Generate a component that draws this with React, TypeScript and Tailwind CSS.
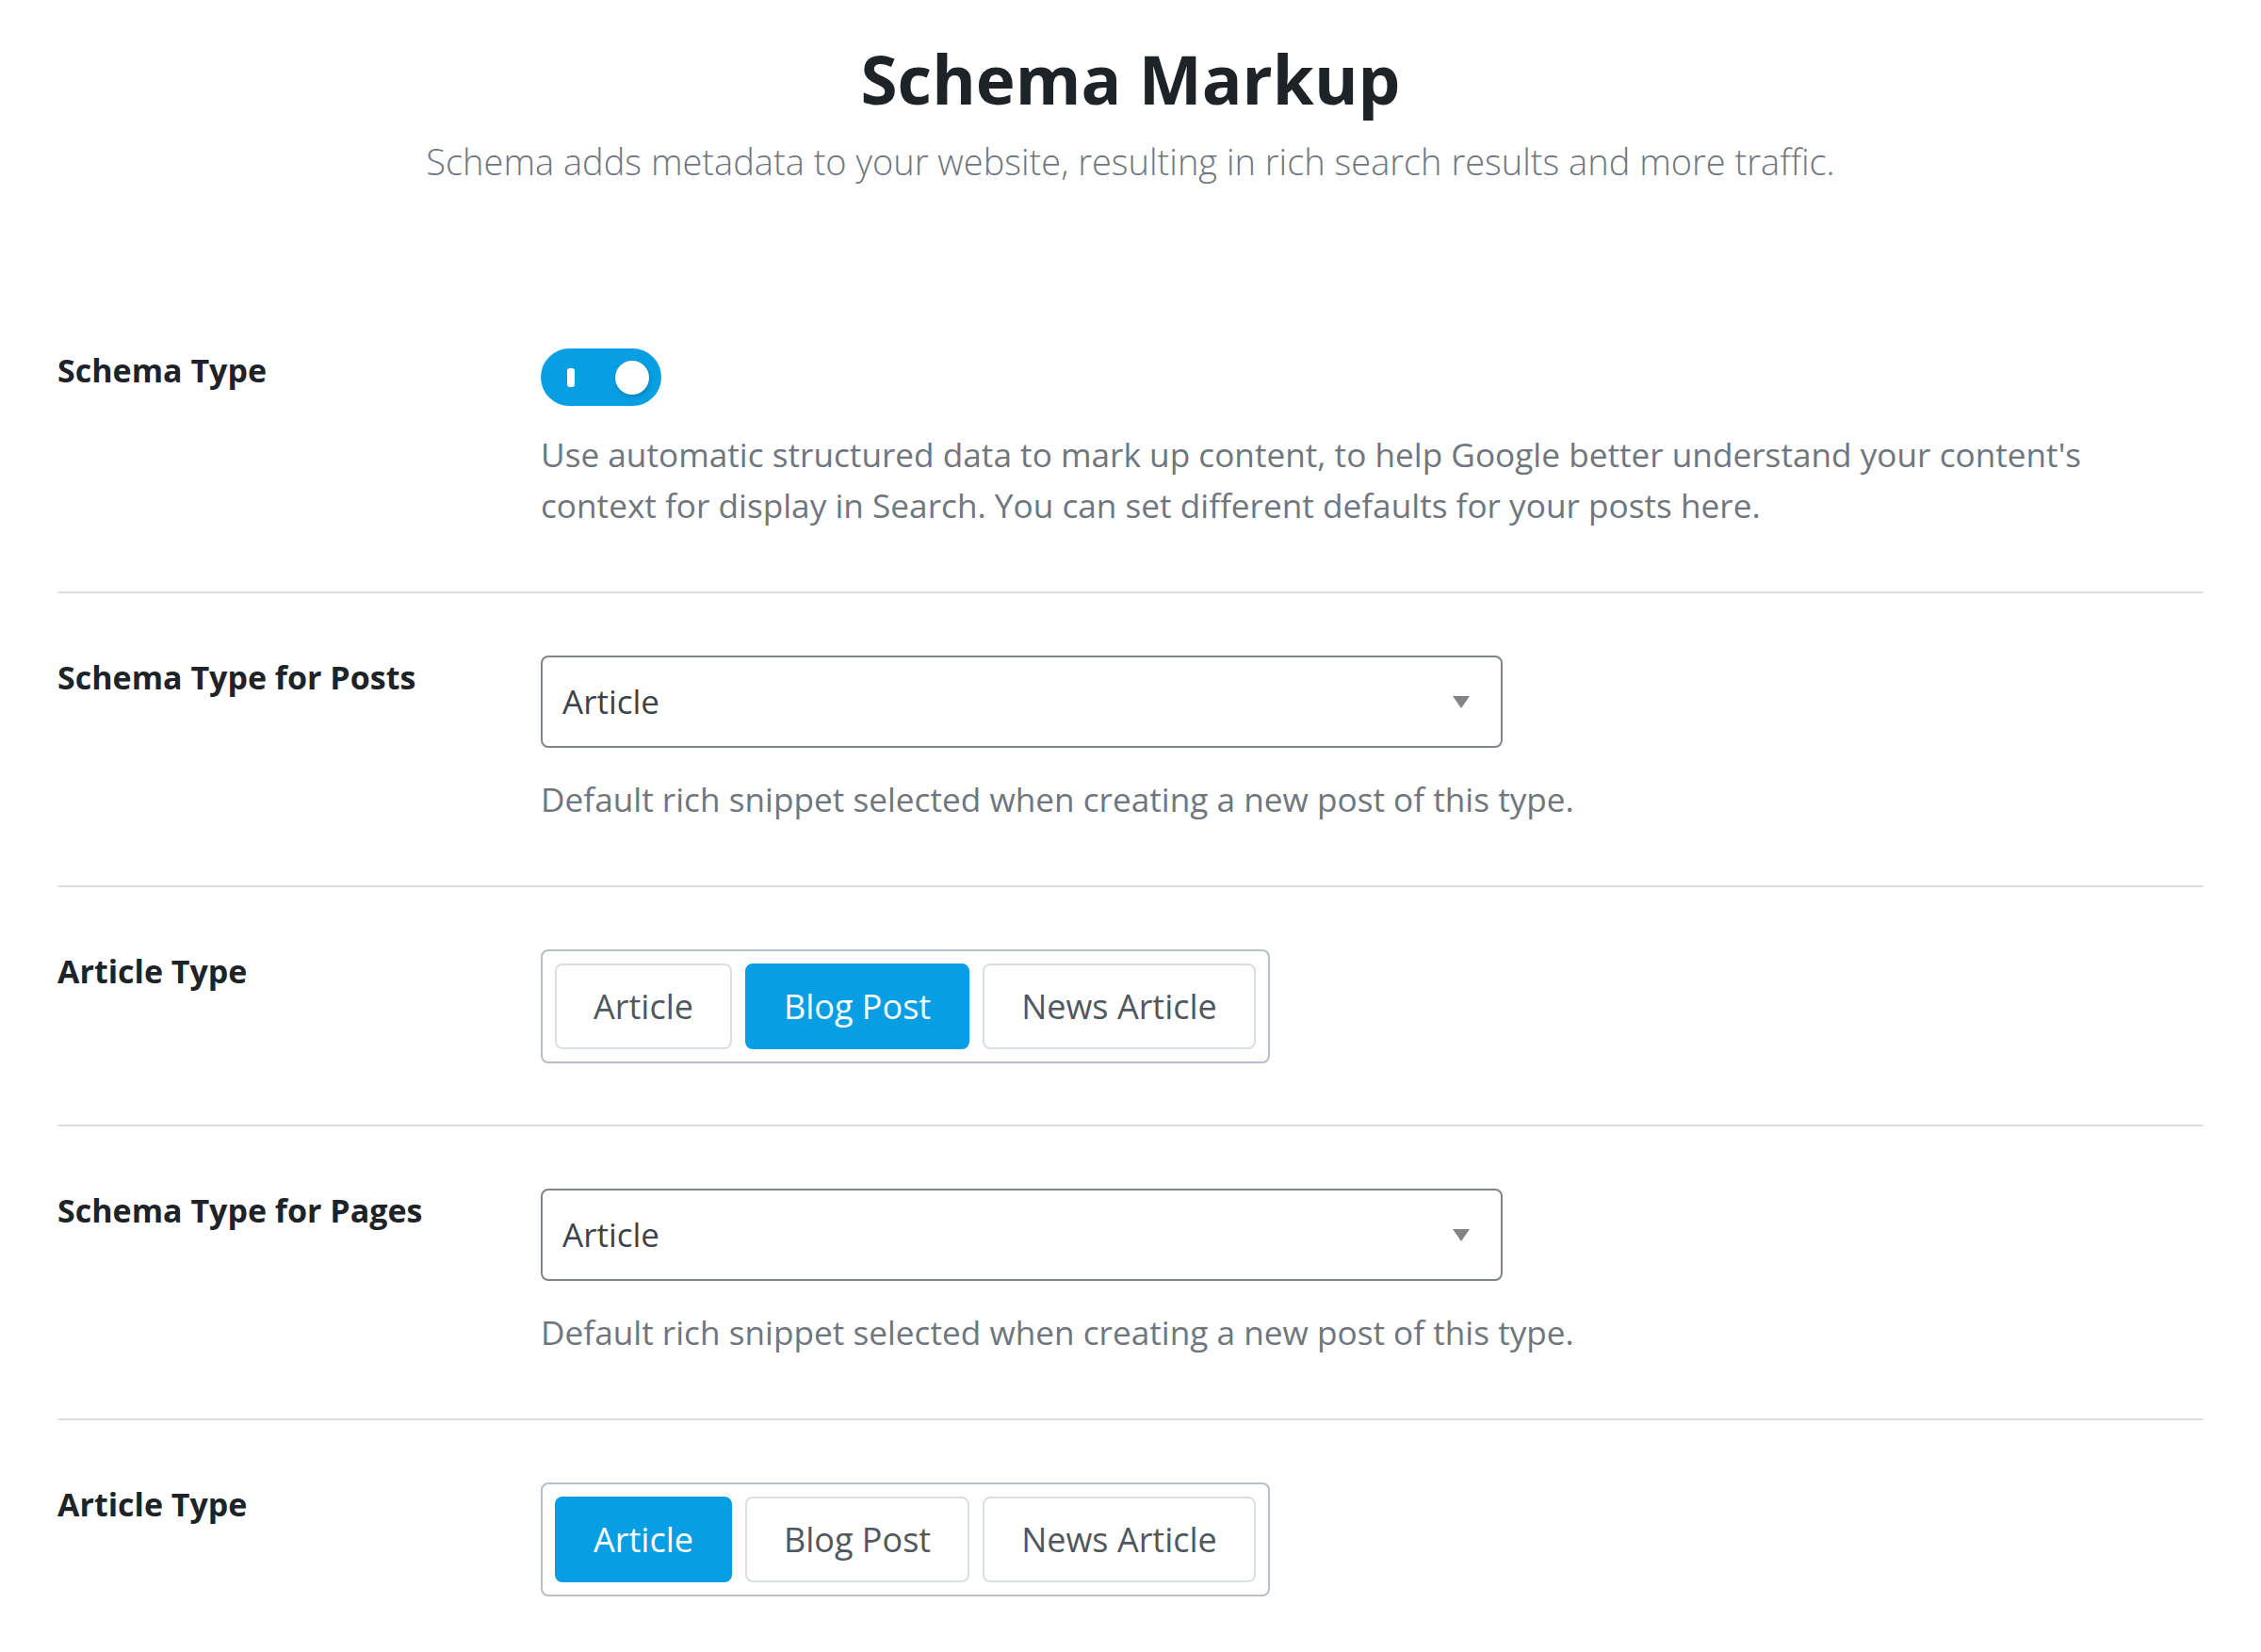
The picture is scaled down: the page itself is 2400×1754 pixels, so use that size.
import { useState } from 'react';

const FONT = { fontFamily: '"Open Sans", "Noto Sans", "Liberation Sans", sans-serif' };

function Toggle({ on, onChange }: { on: boolean; onChange: (v: boolean) => void }) {
  return (
    <button
      type="button"
      onClick={() => onChange(!on)}
      className={`relative flex h-[61px] w-[128px] items-center rounded-full ${on ? 'bg-[#089ee3]' : 'bg-[#c3c4c7]'}`}
    >
      <span className="ml-[28px] h-[20px] w-[8px] rounded-[3px] bg-white" />
      <span
        className={`absolute top-1/2 h-[36px] w-[36px] -translate-y-1/2 rounded-full bg-white shadow-[1px_2px_4px_rgba(0,0,0,0.2)] ${on ? 'right-[13px]' : 'left-[13px]'}`}
      />
    </button>
  );
}

function Select({ value }: { value: string }) {
  return (
    <div className="flex h-[98px] w-[1021px] items-center justify-between rounded-[8px] border-2 border-[#7f858b] bg-white pl-[21px] pr-[33px]">
      <span className="text-[35px] text-[#3c434a]">{value}</span>
      <svg width="18" height="13" viewBox="0 0 18 13">
        <path d="M0 0 L18 0 L9 13 Z" fill="#808487" />
      </svg>
    </div>
  );
}

function Segmented({ options, value, onChange }: { options: string[]; value: string; onChange: (v: string) => void }) {
  return (
    <div className="inline-flex gap-[14px] rounded-[8px] border-2 border-[#b5bec9] bg-white p-[13px]">
      {options.map((o) => (
        <button
          key={o}
          type="button"
          onClick={() => onChange(o)}
          className={`h-[91px] rounded-[8px] border-2 px-[39px] text-[36px] ${
            o === value ? 'border-[#089ee3] bg-[#089ee3] text-white' : 'border-[#dadfe5] bg-white text-[#50575e]'
          }`}
        >
          {o}
        </button>
      ))}
    </div>
  );
}

function Row({ label, children, last }: { label: string; children: React.ReactNode; last?: boolean }) {
  return (
    <div className={`flex pt-[66px] ${last ? 'pb-[60px]' : 'border-b-2 border-[#dde1e6] pb-[65px]'}`}>
      <div className="w-[513px] shrink-0 text-[34px] font-bold leading-[46px] text-[#1d2327]">{label}</div>
      <div className="flex flex-col items-start">{children}</div>
    </div>
  );
}

const Desc = ({ children }: { children: React.ReactNode }) => (
  <p className="text-[35.2px] leading-[54px] text-[#6f767d]">{children}</p>
);

export default function App() {
  const [schemaOn, setSchemaOn] = useState(true);
  const [postType, setPostType] = useState('Blog Post');
  const [pageType, setPageType] = useState('Article');
  const types = ['Article', 'Blog Post', 'News Article'];

  return (
    <div className="min-h-screen bg-white px-[61px]" style={FONT}>
      <div className="pt-[36px] text-center">
        <h1 className="text-[71px] font-bold leading-[96px] text-[#1d2327]">Schema Markup</h1>
        <p className="mt-[12px] text-[38px] font-light leading-[54px] text-[#6f767d]">
          Schema adds metadata to your website, resulting in rich search results and more traffic.
        </p>
      </div>

      <div className="mt-[106px]">
        <Row label="Schema Type">
          <Toggle on={schemaOn} onChange={setSchemaOn} />
          <div className="mt-[24px] max-w-[1720px]">
            <Desc>
              Use automatic structured data to mark up content, to help Google better understand your content's
              context for display in Search. You can set different defaults for your posts here.
            </Desc>
          </div>
        </Row>

        <Row label="Schema Type for Posts">
          <Select value="Article" />
          <div className="mt-[27px]">
            <Desc>Default rich snippet selected when creating a new post of this type.</Desc>
          </div>
        </Row>

        <Row label="Article Type">
          <Segmented options={types} value={postType} onChange={setPostType} />
        </Row>

        <Row label="Schema Type for Pages">
          <Select value="Article" />
          <div className="mt-[27px]">
            <Desc>Default rich snippet selected when creating a new post of this type.</Desc>
          </div>
        </Row>

        <Row label="Article Type" last>
          <Segmented options={types} value={pageType} onChange={setPageType} />
        </Row>
      </div>
    </div>
  );
}
